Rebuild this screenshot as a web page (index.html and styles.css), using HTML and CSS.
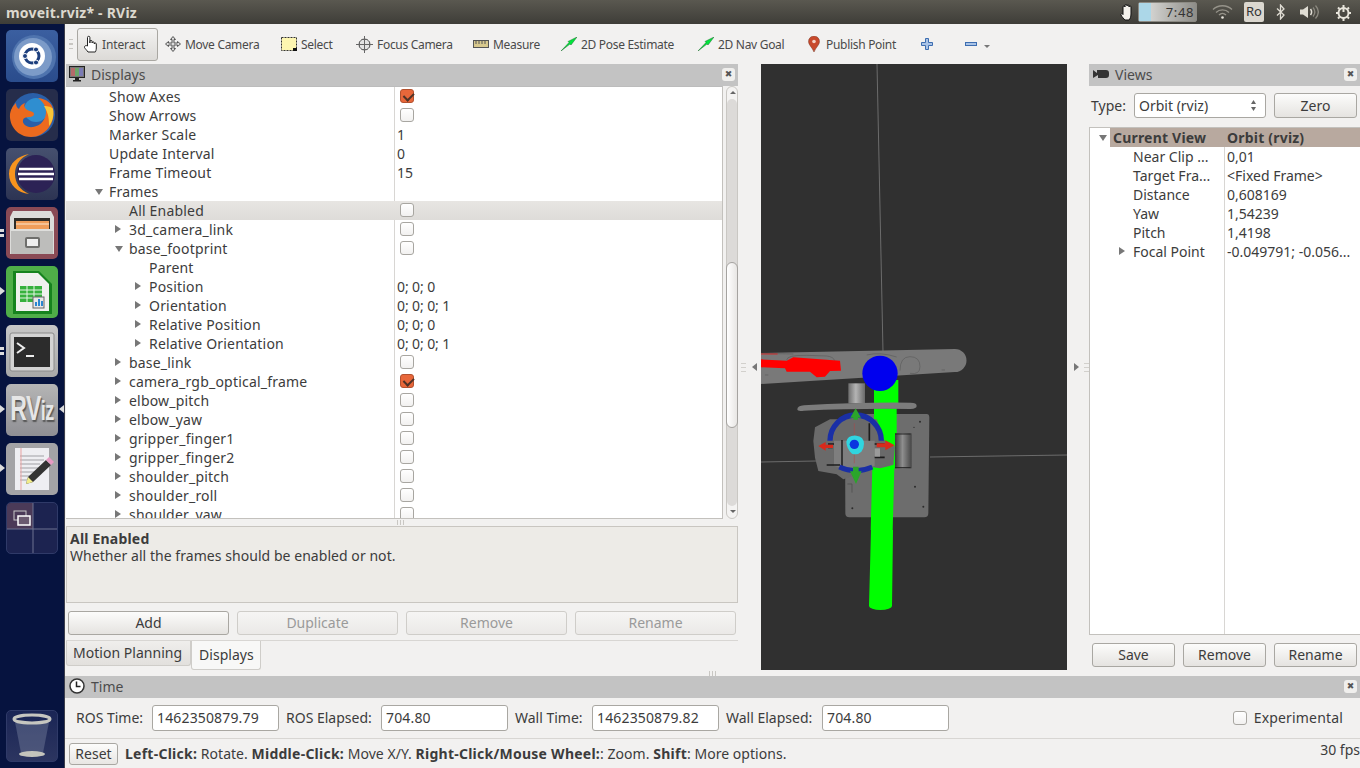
FILE: index.html
```html
<!DOCTYPE html>
<html lang="en">
<head>
<meta charset="utf-8">
<title>moveit.rviz* - RViz</title>
<link rel="stylesheet" href="styles.css">
</head>
<body>
<header class="topbar">
  <div class="win-title">moveit.rviz* - RViz</div>
  <div class="indicators">
    <svg class="ind-hand" width="14" height="18" viewBox="0 0 14 18"><path d="M3 10V4a1 1 0 0 1 2 0V2.500a1 1 0 0 1 2 0V3a1 1 0 0 1 2 0v1a1 1 0 0 1 2 0v7c0 3-1 5-2 6H5c-1-1-3-3-4-5-.5-1 1-2 2-.5z" fill="#f4f2ec" stroke="#111" stroke-width="1"/></svg>
    <div class="clock-box"><span class="clock-fill"></span><span class="clock-text">7:48</span></div>
    <svg class="ind-wifi" width="21" height="16" viewBox="0 0 21 16" fill="none" stroke="#96938a" stroke-width="1.300"><path d="M1 5.500c5-5 14-5 19 0M4 8.500c3.500-3.500 9.500-3.500 13 0M7 11c2-2 5-2 7 0"/><circle cx="10.500" cy="13.500" r="1.300" fill="#e8e5dc" stroke="none"/></svg>
    <div class="ind-lang">Ro</div>
    <svg class="ind-bt" width="9" height="16" viewBox="0 0 9 16" fill="none" stroke="#e0ddd4" stroke-width="1.300"><path d="M1 4.500l7 6.500-3.500 4V1L8 5 1 11.500"/></svg>
    <svg class="ind-vol" width="20" height="16" viewBox="0 0 20 16"><path d="M1 5.500h3L9 2v12l-5-3.500H1z" fill="#e0ddd4"/><path d="M11.500 5c1.500 2 1.500 4 0 6" fill="none" stroke="#e0ddd4" stroke-width="1.500"/><path d="M14 3.500c2.500 3 2.500 6 0 9M16.500 1.500c3.500 4 3.500 9 0 13" fill="none" stroke="#8b887f" stroke-width="1.300"/></svg>
    <svg class="ind-pow" width="17" height="17" viewBox="0 0 17 17" fill="none" stroke="#e8e5dc" stroke-width="2"><circle cx="8.500" cy="9" r="5"/><path d="M8.500 1v7M8.500 14v3M1 9h2.500M13.500 9H16M3 3.500l1.500 1.500M14 3.500 12.500 5M3 14.500 4.500 13M14 14.500 12.500 13"/></svg>
  </div>
</header>
<div class="desktop">
  <nav class="launcher">
    <div class="tile tile-ubuntu"><svg width="52" height="52" viewBox="0 0 52 52"><circle cx="28" cy="27" r="22" fill="#4f74ae"/><circle cx="27" cy="27" r="19" fill="#7c9bc8"/><circle cx="26" cy="26" r="13" fill="#fff"/><circle cx="26" cy="26" r="7" fill="none" stroke="#1d3f7d" stroke-width="3"/><circle cx="19" cy="26" r="2.500" fill="#1d3f7d" stroke="#fff"/><circle cx="30" cy="19.500" r="2.500" fill="#1d3f7d" stroke="#fff"/><circle cx="30" cy="32.500" r="2.500" fill="#1d3f7d" stroke="#fff"/></svg></div>
    <div class="tile tile-firefox"><svg width="52" height="52" viewBox="0 0 52 52"><circle cx="27" cy="26" r="22" fill="#2a5fa8"/><circle cx="30" cy="21" r="12" fill="#2f8ed0"/><path d="M47 20c3 15-9 28-22 28C12 48 3 37 4 25c1-6 4-9 6-11 0 3 1 5 3 6 1-3 3-5 6-6-2 4 1 7 5 8 4 1 5 3 3 5-3 2-9 0-10 4-1 4 4 8 10 7 8-1 13-8 13-15 0-7-4-11-8-14 9 1 14 6 15 11z" fill="#ec6a1e"/><path d="M47 20c1 6 0 12-4 17 0-6 0-12-5-20 4 0 8 1 9 3z" fill="#f7c437"/></svg></div>
    <div class="tile tile-eclipse"><svg width="52" height="52" viewBox="0 0 52 52"><circle cx="30" cy="26" r="19" fill="#2c2255"/><path d="M23 6C12 8 3 15 3 26s9 19 20 20C14 42 9 35 9 26s5-16 14-20z" fill="#f7941e"/><path d="M13 21h34M12 26h36M13 31h34" stroke="#fff" stroke-width="2.400"/></svg></div>
    <div class="tile tile-files"><svg width="52" height="52" viewBox="0 0 52 52"><path d="M7 4h38l3 6v37H4V10z" fill="#dcdcda"/><rect x="8" y="11" width="36" height="11" fill="#2e2c28"/><rect x="10" y="14" width="33" height="8" fill="#ef9d5a"/><path d="M10 17h33" stroke="#fbe6d0"/><path d="M5 22h42v25H5z" fill="#bdbdbb"/><path d="M5 22h42v2H5z" fill="#dededc"/><rect x="20" y="31" width="13" height="9" rx="1" fill="#eee" stroke="#6e6e6c" stroke-width="2"/></svg></div>
    <div class="tile tile-calc"><svg width="52" height="52" viewBox="0 0 52 52"><path d="M7 5h26l13 13v30H7z" fill="#16831e"/><path d="M10 7h22l11 11v27H10z" fill="#f0f1ee"/><path d="M14 20h22v16H14z" fill="#36b13d"/><path d="M14 24h22M14 28h22M14 32h22M21 20v16M28 20v16" stroke="#e6f5e6"/><rect x="27" y="31" width="11" height="11" fill="#e8e8e8" stroke="#666"/><path d="M30 40v-4M33 40v-7M36 40v-5" stroke="#2a86d0" stroke-width="2"/></svg></div>
    <div class="tile tile-term"><svg width="52" height="52" viewBox="0 0 52 52"><rect x="4" y="8" width="44" height="38" rx="2" fill="#d3d3d3" stroke="#8b8b8b"/><rect x="8" y="12" width="36" height="30" fill="#2c2c2c"/><path d="M11 18l7 5-7 5" fill="none" stroke="#eee" stroke-width="2"/><path d="M20 31h8" stroke="#eee" stroke-width="2"/></svg></div>
    <div class="tile tile-rviz"><span class="rviz-word">RV<small>iz</small></span></div>
    <div class="tile tile-edit"><svg width="52" height="52" viewBox="0 0 52 52"><rect x="9" y="5" width="34" height="42" fill="#eeeef2"/><path d="M14 13h24M14 17h24M14 21h20M14 25h18M14 29h16M14 33h14M14 37h10" stroke="#a0a0a5"/><path d="M15 5v42" stroke="#e7a3a3"/><path d="M40 17l5 5-18 17-7 2 2-7z" fill="#333"/><path d="M40 17l3-3 5 5-3 3z" fill="#e79ac3"/><path d="M22 34l5 5-7 2z" fill="#f2ec8a"/></svg></div>
    <div class="tile tile-work"><svg width="50" height="50" viewBox="0 0 50 50"><rect x="0" y="0" width="26" height="26" fill="#4b3a58"/><path d="M26 0v52M0 26h52" stroke="#6d7390"/><rect x="7" y="8" width="12" height="9" fill="none" stroke="#c8c8c8"/><rect x="11" y="13" width="12" height="9" fill="#6a5a70" stroke="#fff" stroke-width="1.500"/></svg></div>
    <div class="tile tile-trash"><svg width="50" height="50" viewBox="0 0 50 50"><path d="M8 11l6 31c1 4 21 4 22 0l6-31z" fill="#7f8aa6" fill-opacity=".4"/><ellipse cx="25" cy="43" rx="13" ry="3" fill="#c4c4bc"/><ellipse cx="25" cy="8" rx="18" ry="4" fill="none" stroke="#c6c6c0" stroke-width="3"/></svg></div>
    <span class="pip pip-calc"></span><span class="pip pip-rviz"></span><span class="pip pip-rviz-r"></span><span class="pip pip-edit"></span>
    <span class="dash dash-a"></span><span class="dash dash-b"></span><span class="dash dash-c"></span><span class="dash dash-d"></span>
  </nav>

  <main class="app">
    <div class="toolbar">
      <span class="grip"></span>
      <button class="tool tool-active"><svg width="16" height="18" viewBox="0 0 16 18" fill="#fff" stroke="#222"><path d="M4.500 11V2.500a1.200 1.200 0 0 1 2.400 0V8V6.500a1.100 1.100 0 0 1 2.200 0V8a1.100 1.100 0 0 1 2.200 0v1a1 1 0 0 1 2 0v4c0 2-.5 3-1 4H5C4 15.500 2 13.500 1.500 12.500 1 11 3 10 4.500 11z"/></svg>Interact</button>
      <button class="tool tool-move"><svg width="16" height="16" viewBox="0 0 16 16" fill="#ddd" stroke="#555"><path d="M8 .5l2.500 3h-1.500V7H12.500V5.500l3 2.500-3 2.500V9H9v3.500h1.500L8 15.500l-2.500-3H7V9H3.500v1.500L.5 8l3-2.500V7H7V3.500H5.500z"/></svg>Move Camera</button>
      <button class="tool tool-select"><svg width="16" height="14" viewBox="0 0 16 14"><rect x=".5" y=".5" width="15" height="13" fill="#fdf6b0" stroke="#333" stroke-dasharray="2 1"/><rect x="12" y="11" width="4" height="3" fill="#111"/></svg>Select</button>
      <button class="tool tool-focus"><svg width="17" height="17" viewBox="0 0 17 17" fill="none" stroke="#666"><circle cx="8.500" cy="8.500" r="5.500" fill="#e4e4e4"/><path d="M8.500 0v17M0 8.500h17M5.500 3.500h6M5.500 13.500h6M3.500 5.500v6M13.500 5.500v6"/></svg>Focus Camera</button>
      <button class="tool tool-measure"><svg width="16" height="8" viewBox="0 0 16 8"><rect x=".5" y=".5" width="15" height="7" fill="#d8c98e" stroke="#555"/><path d="M3 1v3M6 1v3M9 1v3M12 1v3" stroke="#555"/></svg>Measure</button>
      <button class="tool tool-pose"><svg width="16" height="14" viewBox="0 0 16 14"><path d="M0 14l9-7 1 1 6-8-9 4.500 1 1z" fill="#00e63c" stroke="#1c6b2c" stroke-width=".5"/></svg>2D Pose Estimate</button>
      <button class="tool tool-nav"><svg width="16" height="14" viewBox="0 0 16 14"><path d="M0 14l9-7 1 1 6-8-9 4.500 1 1z" fill="#00e63c" stroke="#1c6b2c" stroke-width=".5"/></svg>2D Nav Goal</button>
      <button class="tool tool-point"><svg width="12" height="16" viewBox="0 0 12 16"><path d="M6 16C4 11 .5 9 .5 5.500a5.500 5.500 0 0 1 11 0C11.500 9 8 11 6 16z" fill="#c8492b" stroke="#7a3a28" stroke-width=".5"/><circle cx="6" cy="5.500" r="1.800" fill="#f3d2c4"/></svg>Publish Point</button>
      <button class="tool tool-plus"><svg width="12" height="12" viewBox="0 0 12 12"><path d="M4.500 .5h3v4h4v3h-4v4h-3v-4h-4v-3h4z" fill="#a9c3e6" stroke="#3d6db0"/></svg></button>
      <button class="tool tool-minus"><svg width="12" height="4" viewBox="0 0 12 4"><rect x=".5" y=".5" width="11" height="3" fill="#a9c3e6" stroke="#3d6db0"/></svg><span class="tool-drop"></span></button>
    </div>

    <div class="workspace">
      <section class="dock dock-left">
        <div class="dock-title"><svg width="16" height="16" viewBox="0 0 16 16"><rect x=".5" y=".5" width="15" height="11" fill="#777" stroke="#222"/><rect x="2" y="2" width="4" height="8" fill="#b46a6a"/><rect x="6" y="2" width="4" height="8" fill="#6aa56a"/><rect x="10" y="2" width="4" height="8" fill="#7a7ab4"/><path d="M6 12h4v2h2v1.500H4V14h2z" fill="#222"/></svg><span>Displays</span><button class="close-btn">✖</button></div>
        <div class="tree-wrap">
          <div class="tree">
            <div class="row d2"><span class="name">Show Axes</span><span class="val"><i class="check on"></i></span></div>
            <div class="row d2"><span class="name">Show Arrows</span><span class="val"><i class="check"></i></span></div>
            <div class="row d2"><span class="name">Marker Scale</span><span class="val">1</span></div>
            <div class="row d2"><span class="name">Update Interval</span><span class="val">0</span></div>
            <div class="row d2"><span class="name">Frame Timeout</span><span class="val">15</span></div>
            <div class="row d2 open"><span class="name">Frames</span><span class="val"></span></div>
            <div class="row d3 selected"><span class="name">All Enabled</span><span class="val"><i class="check"></i></span></div>
            <div class="row d3 closed"><span class="name">3d_camera_link</span><span class="val"><i class="check"></i></span></div>
            <div class="row d3 open"><span class="name">base_footprint</span><span class="val"><i class="check"></i></span></div>
            <div class="row d4"><span class="name">Parent</span><span class="val"></span></div>
            <div class="row d4 closed"><span class="name">Position</span><span class="val">0; 0; 0</span></div>
            <div class="row d4 closed"><span class="name">Orientation</span><span class="val">0; 0; 0; 1</span></div>
            <div class="row d4 closed"><span class="name">Relative Position</span><span class="val">0; 0; 0</span></div>
            <div class="row d4 closed"><span class="name">Relative Orientation</span><span class="val">0; 0; 0; 1</span></div>
            <div class="row d3 closed"><span class="name">base_link</span><span class="val"><i class="check"></i></span></div>
            <div class="row d3 closed"><span class="name">camera_rgb_optical_frame</span><span class="val"><i class="check on"></i></span></div>
            <div class="row d3 closed"><span class="name">elbow_pitch</span><span class="val"><i class="check"></i></span></div>
            <div class="row d3 closed"><span class="name">elbow_yaw</span><span class="val"><i class="check"></i></span></div>
            <div class="row d3 closed"><span class="name">gripper_finger1</span><span class="val"><i class="check"></i></span></div>
            <div class="row d3 closed"><span class="name">gripper_finger2</span><span class="val"><i class="check"></i></span></div>
            <div class="row d3 closed"><span class="name">shoulder_pitch</span><span class="val"><i class="check"></i></span></div>
            <div class="row d3 closed"><span class="name">shoulder_roll</span><span class="val"><i class="check"></i></span></div>
            <div class="row d3 closed"><span class="name">shoulder_yaw</span><span class="val"><i class="check"></i></span></div>
          </div>
          <div class="scrollbar">
            <span class="sb-btn sb-up"></span>
            <div class="sb-trough"><span class="sb-thumb"></span></div>
            <span class="sb-btn sb-down"></span>
          </div>
        </div>
        <div class="hgrip"><span></span></div>
        <div class="desc"><strong>All Enabled</strong><br>Whether all the frames should be enabled or not.</div>
        <div class="btn-row">
          <button class="btn">Add</button>
          <button class="btn" disabled>Duplicate</button>
          <button class="btn" disabled>Remove</button>
          <button class="btn" disabled>Rename</button>
        </div>
        <div class="tabs">
          <div class="tab">Motion Planning</div>
          <div class="tab tab-on">Displays</div>
        </div>
        <div class="hgrip hgrip-right"><span></span></div>
      </section>

      <div class="splitter splitter-l"><span class="vgrip"></span><span class="arrow-left"></span></div>

      <div class="view3d">
        <svg width="306" height="606" viewBox="761 64 306 606">
          <defs>
            <linearGradient id="motor" x1="0" x2="1" y1="0" y2="0"><stop offset="0" stop-color="#3a3a3a"/><stop offset=".45" stop-color="#8e8e8e"/><stop offset="1" stop-color="#454545"/></linearGradient>
            <linearGradient id="bracket" x1="0" x2="1" y1="0" y2="0"><stop offset="0" stop-color="#6e6e6e"/><stop offset=".45" stop-color="#b4b4b4"/><stop offset="1" stop-color="#6a6a6a"/></linearGradient>
          </defs>
          <rect x="761" y="64" width="306" height="606" fill="#303030"/>
          <path d="M877 64 884 400M761 462 816 461M930 457 1067 455" stroke="#6c6c6c" stroke-width="1" fill="none"/>
          <path d="M761 353 955 349a11.500 11.500 0 0 1 0 23L761 384z" fill="#797979"/>
          <g transform="translate(760 340) scale(.33333)">
            <path d="M3 40 100 42M80 60q0-15 60-14l60 2q20 2 24 14M320 45q40-10 90 6M420 92q0-42 30-42t30 30q0 25-30 20M15 105h10M545 90h10" stroke="#5c5c5c" stroke-width="2" fill="none"/>
            <path d="M3 58 80 62 100 52 240 62 243 92 210 93 195 110 170 112 150 95 80 95 75 85 3 82z" fill="#f00"/>
            <path d="M3 41h50v2H3z" fill="#f00"/>
            <path d="M342 120h73v70h-73z" fill="#0f0"/>
            <circle cx="360" cy="100" r="53" fill="#00e"/>
            <path d="M265 130h50v60h-50z" fill="url(#bracket)"/>
            <path d="M255 232q0-10 10-10h235q8 0 8 10l-3 288q0 12-12 12H268q-12 0-12-12z" fill="#6d6d6d"/>
            <g fill="#2c2c2c"><circle cx="480" cy="245" r="3"/><circle cx="490" cy="500" r="3"/><circle cx="277" cy="505" r="3"/><circle cx="465" cy="440" r="3"/><circle cx="462" cy="262" r="2"/></g>
            <path d="M342 205h68v95h-68zM337 380h66l-5 190h-66z" fill="#0f0"/>
            <path d="M340 300h70v85h-70z" fill="#0f0"/>
            <path d="M112 208q0-10 20-12 170-10 320-8 18 0 18 10 0 8-18 9-170-2-320 5-20 3-20-4z" fill="#7c7c7c"/>
            <path d="M165 262l45-24h140l22 62 33 20-5 55-40 10-30-5-50 28-30 10-20-15-55-10-10-40-5-50z" fill="#6a6a6a"/>
            <path d="M405 280h50v105h-50z" fill="url(#motor)"/>
            <path d="M405 282h47M405 383h47" stroke="#222" stroke-width="3"/>
            <path d="M222 302h122v76q-60 14-122 0z" fill="#7e7e7e"/>
            <path d="M204 312h18M204 322h14M200 375h40M344 312h30M344 352h30M328 250v52" stroke="#1c1c1c" stroke-width="5" fill="none"/>
            <path d="M262 432h14v26" stroke="#4a4a4a" stroke-width="2" fill="none"/>
            <path d="M246 300v80" stroke="#111" stroke-width="4"/>
            <path d="M344 325h16v25h-16z" fill="#9a9a9a"/>
            <path d="M210 302a77 77 0 0 1 154 0" fill="none" stroke="#1a2fa6" stroke-width="16"/>
            <path d="M238 381q49 22 99 0" fill="none" stroke="#1a2fa6" stroke-width="15"/>
            <path d="M283 250v120" stroke="#b54545" stroke-width="1.500"/>
            <path d="M287 205l16 28h-9v6h-14v-6h-9z" fill="#2ba52b"/>
            <path d="M279 380h17v14h9l-17 38-18-38h9z" fill="#2ba52b"/>
            <path d="M175 318l22-12v8h22v10h-22v8z" fill="#d82a1c"/>
            <path d="M404 316l-28-15v9h-26v12h26v9z" fill="#d82a1c"/>
            <path d="M259 305q4-20 30-18 22 2 23 24 0 14-8 24-12 12-28 6-16-14-17-36z" fill="#30d5e0"/>
            <circle cx="283" cy="313" r="14" fill="#0a34e0"/>
            <path d="M395 375h8v7h-8z" fill="#0f0"/>
          </g>
          <path d="M871 530h22l-1 76a11.500 4 0 0 1-23 0z" fill="#0f0"/>
        </svg>
      </div>

      <div class="splitter splitter-r"><span class="arrow-right"></span><span class="vgrip"></span></div>

      <section class="dock dock-right">
        <div class="dock-title"><svg width="16" height="10" viewBox="0 0 16 10"><path d="M0 1l4 3V1h0l1 0h8a3 3 0 0 1 3 3v2a3 3 0 0 1-3 3H5V6L0 9z" fill="#333"/></svg><span>Views</span><button class="close-btn">✖</button></div>
        <div class="type-row">
          <label class="type-label">Type:</label>
          <div class="combo"><span>Orbit (rviz)</span><svg width="7" height="13" viewBox="0 0 7 13" fill="#666"><path d="M3.500 1 6 5H1zM3.500 12 1 8h5z"/></svg></div>
          <button class="btn btn-zero">Zero</button>
        </div>
        <div class="vtree">
          <div class="vrow vhead"><span class="vname">Current View</span><span class="vval">Orbit (rviz)</span></div>
          <div class="vrow"><span class="vname">Near Clip ...</span><span class="vval">0,01</span></div>
          <div class="vrow"><span class="vname">Target Fra...</span><span class="vval">&lt;Fixed Frame&gt;</span></div>
          <div class="vrow"><span class="vname">Distance</span><span class="vval">0,608169</span></div>
          <div class="vrow"><span class="vname">Yaw</span><span class="vval">1,54239</span></div>
          <div class="vrow"><span class="vname">Pitch</span><span class="vval">1,4198</span></div>
          <div class="vrow vfocal"><span class="vname">Focal Point</span><span class="vval">-0.049791; -0.056...</span></div>
        </div>
        <div class="vbtns">
          <button class="btn">Save</button>
          <button class="btn">Remove</button>
          <button class="btn">Rename</button>
        </div>
      </section>
    </div>

    <section class="time-panel">
      <div class="dock-title"><svg width="16" height="16" viewBox="0 0 16 16"><circle cx="8" cy="8" r="7" fill="#fff" stroke="#333" stroke-width="1.500"/><path d="M7.500 3.500v5h4" fill="none" stroke="#222" stroke-width="1.500"/></svg><span>Time</span><button class="close-btn">✖</button></div>
      <div class="time-row">
        <label class="t-label t-rt">ROS Time:</label><input class="t-input" value="1462350879.79">
        <label class="t-label t-re">ROS Elapsed:</label><input class="t-input" value="704.80">
        <label class="t-label t-wt">Wall Time:</label><input class="t-input" value="1462350879.82">
        <label class="t-label t-we">Wall Elapsed:</label><input class="t-input" value="704.80">
        <span class="t-exp"><i class="check"></i>Experimental</span>
      </div>
    </section>
    <footer class="status">
      <button class="reset">Reset</button>
      <span class="hint"><b>Left-Click:</b> Rotate. <b>Middle-Click:</b> Move X/Y. <b>Right-Click/Mouse Wheel:</b>: Zoom. <b>Shift</b>: More options.</span>
      <span class="fps">30 fps</span>
    </footer>
  </main>
</div>
</body>
</html>
```
FILE: styles.css
```css
* { box-sizing: border-box; }
html, body { margin: 0; height: 100%; overflow: hidden; }
body {
  width: 1360px; height: 768px; display: flex; flex-direction: column;
  font: 14px/19px "Noto Sans", "DejaVu Sans", sans-serif; color: #3c3c3c; background: #f2f1f0;
}
button, input { font: inherit; color: inherit; letter-spacing: inherit; }

/* top bar */
.topbar {
  height: 24px; flex: none; display: flex; align-items: center; justify-content: space-between;
  background: linear-gradient(#5a5850, #3e3d38);
}
.win-title { padding-left: 6px; color: #dcd8ce; font-weight: 700; font-size: 14px; letter-spacing: .22px; }
.indicators { display: flex; align-items: center; height: 24px; padding-right: 8px; }
.ind-hand { margin-right: 4px; }
.clock-box {
  width: 59px; height: 20px; border: 1px solid #8d8b84; border-radius: 2px; position: relative;
  background: linear-gradient(90deg, #e4e4e2, #8e8d88); display: flex; justify-content: flex-end; align-items: center;
  padding-right: 2px; font-size: 13px; color: #333; letter-spacing: .6px;
}
.clock-fill { position: absolute; left: 0; top: 0; bottom: 0; width: 12px; background: #acd7e8; }
.clock-text { position: relative; }
.ind-wifi { margin-left: 15px; }
.ind-lang {
  width: 20px; height: 20px; margin-left: 11px; background: #dbd7cf; border-radius: 2px;
  text-align: center; font-size: 13px; color: #333;
}
.ind-bt { margin-left: 12px; }
.ind-vol { margin-left: 14px; }
.ind-pow { margin-left: 16px; }

.desktop { flex: 1; display: flex; min-height: 0; }

/* launcher */
.launcher {
  width: 65px; flex: none; position: relative; display: flex; flex-direction: column; align-items: flex-start;
  gap: 7px; padding: 6px 0 6px 6px; background: #06133f; border-right: 1px solid #3d3f4c;
}
.tile { width: 52px; height: 52px; border-radius: 5px; overflow: hidden; flex: none; }
.tile svg { display: block; }
.tile-ubuntu { background: linear-gradient(#3b5fa0, #2a4c8c); }
.tile-firefox { background: #262d4b; }
.tile-eclipse { background: linear-gradient(#46506f, #2d3453); }
.tile-files { background: #8a4a55; }
.tile-calc { background: #4fae48; }
.tile-term { background: linear-gradient(#c7c7c7, #a8a8a8); }
.tile-rviz { background: linear-gradient(#b5b5b5, #8f8f94); display: flex; align-items: center; justify-content: center; }
.rviz-word {
  display: inline-block; transform: scaleY(1.5); font: 700 23px/23px "Liberation Sans", sans-serif; color: #e6e6e6; letter-spacing: -.5px; text-shadow: 1px 1px 1px #555;
}
.rviz-word small { font-size: 18px; }
.tile-edit { background: #a3a3a6; }
.tile-work { background: #1c2350; border: 1px solid #2f3a68; }
.tile-trash { background: linear-gradient(#1a2555, #2c3560); margin-top: auto; border: 1px solid #2f3a68; }
.pip { position: absolute; left: 0; width: 0; height: 0; border-style: solid; border-width: 4px 0 4px 5px; border-color: transparent transparent transparent #dcdcdc; }
.pip-calc { top: 263px; }
.pip-rviz { top: 381px; }
.pip-edit { top: 440px; }
.pip-rviz-r { top: 381px; left: 59px; border-width: 4px 5px 4px 0; border-color: transparent #dcdcdc transparent transparent; }
.dash { position: absolute; left: 0; width: 4px; height: 3px; background: #dcdcdc; }
.dash-a { top: 205px; }
.dash-b { top: 210px; }
.dash-c { top: 323px; }
.dash-d { top: 328px; }

/* app */
.app { flex: 1; min-width: 0; display: flex; flex-direction: column; background: #f2f1f0; }
.toolbar { height: 40px; flex: none; display: flex; align-items: center; padding-left: 4px; color: #4a4a4a; font-size: 12px; letter-spacing: -.3px; }
.grip { width: 4px; height: 10px; margin-right: 4px; border-top: 1px solid #c8c6c2; border-bottom: 1px solid #c8c6c2; background: linear-gradient(#f2f1f0 40%, #c8c6c2 40%, #c8c6c2 60%, #f2f1f0 60%); }
.tool {
  height: 32px; border: 0; background: none; padding: 0; display: flex; align-items: center; gap: 4px; flex: none; text-align: left;
}
.tool-active {
  width: 81px; height: 33px; padding-left: 5px; margin-right: 7px; gap: 3px; border: 1px solid #a9a7a2; border-radius: 3px;
  background: linear-gradient(#f3f2f1, #dcdad7); letter-spacing: -.12px;
}
.tool-move { width: 116px; }
.tool-select { width: 75px; }
.tool-focus { width: 117px; }
.tool-measure { width: 88px; }
.tool-pose { width: 137px; }
.tool-nav { width: 110px; }
.tool-point { width: 113px; gap: 6px; }
.tool-plus { width: 44px; }
.tool-minus { width: 30px; }
.tool-drop { width: 0; height: 0; margin-left: 3px; margin-top: 4px; border: 3.500px solid transparent; border-top-color: #777; border-bottom: 0; }

.workspace { flex: 1; min-height: 0; display: flex; padding-top: 0; }
.dock { display: flex; flex-direction: column; min-height: 0; }
.dock-left { width: 673px; flex: none; padding-left: 1px; }
.dock-right { width: 271px; flex: none; }
.dock-title {
  height: 22px; flex: none; display: flex; align-items: center; gap: 6px; padding: 0 3px 2px 4px;
  background: #c3c3c3; color: #4c4c4c;
}
.dock-left .dock-title { padding-left: 3px; }
.dock-title span { flex: 1; }
.close-btn {
  width: 13px; height: 13px; padding: 0; border: 0; border-radius: 3px; background: #f0efed; color: #555;
  font: 9px/13px "DejaVu Sans", sans-serif; text-align: center;
}
.tree-wrap { height: 433px; flex: none; display: flex; }
.tree {
  width: 657px; flex: none; overflow: hidden; background: #fff; border: 1px solid #c3c1bd; border-top-color: #bcbcbc; border-left: 0;
  position: relative; background-image: linear-gradient(#d8d6d3, #d8d6d3); background-size: 1px 100%; background-repeat: no-repeat; background-position: 328px 0;
}
.row { height: 19px; display: flex; position: relative; color: #3c3c3c; }
.name { width: 329px; flex: none; white-space: nowrap; letter-spacing: .2px; }
.val { padding-left: 2px; flex: 1; white-space: nowrap; letter-spacing: -.1px; }
.d2 .name { padding-left: 43px; }
.d3 .name { padding-left: 63px; }
.d4 .name { padding-left: 83px; }
.selected { background: linear-gradient(#e7e5e2, #dedcd9); }
.open .name::before, .closed .name::before { content: ""; position: absolute; width: 0; height: 0; border-style: solid; }
.open .name::before { top: 7px; border-width: 6px 4px 0 4px; border-color: #777 transparent transparent transparent; }
.closed .name::before { top: 5px; border-width: 4px 0 4px 6px; border-color: transparent transparent transparent #777; }
.d2.open .name::before { left: 29px; }
.d3.open .name::before, .d3.closed .name::before { left: 49px; }
.d4.closed .name::before { left: 69px; }
.check {
  display: inline-block; width: 14px; height: 14px; margin: 2px 0 0 3px; border: 1px solid #a8a6a1; border-radius: 3px; background: linear-gradient(#fff, #f2f1f0); position: relative; vertical-align: top;
}
.check.on { background: #e8673a; border-color: #b2512f; }
.check.on::after { content: ""; position: absolute; left: 2px; top: 0; width: 8px; height: 5px; border-left: 2px solid #4e3328; border-bottom: 2px solid #4e3328; transform: rotate(-45deg) translate(-1px, 2px); }
.scrollbar { width: 13px; margin-left: 3px; display: flex; flex-direction: column; border: 1px solid #c9c7c3; border-radius: 6px; background: #f4f3f2; }
.sb-btn { height: 12px; flex: none; position: relative; }
.sb-up::after, .sb-down::after { content: ""; position: absolute; left: 3px; top: 4px; border: 3px solid transparent; }
.sb-up::after { border-bottom: 3px solid #666; border-top: 0; }
.sb-down::after { border-top: 3px solid #666; border-bottom: 0; }
.sb-trough { flex: 1; padding-top: 163px; background: #dcdad8; border-radius: 6px; }
.sb-thumb { display: block; height: 166px; margin: 0 -1px; border: 1px solid #a5a3a0; border-radius: 6px; background: linear-gradient(90deg, #fff, #e8e6e4); }
.hgrip { height: 7px; flex: none; display: flex; justify-content: center; padding-right: 4px; }
.hgrip span { width: 7px; height: 5px; margin-top: 1px; background: repeating-linear-gradient(90deg, #c9c7c3 0 1px, transparent 1px 3px); }
.desc { height: 77px; flex: none; border: 1px solid #c9c6c1; background: #edebe7; padding: 3px 3px; line-height: 17px; margin-bottom: 8px; letter-spacing: .05px; }
.desc strong { font-weight: 700; letter-spacing: .2px; }
.btn-row { display: grid; grid-template-columns: repeat(4, 161px); gap: 8px; padding-left: 2px; height: 30px; flex: none; border-bottom: 1px solid #d8d6d3; }
.btn {
  height: 24px; padding: 0 0 2px; border: 1px solid #a9a7a2; border-radius: 3px; background: linear-gradient(#fcfcfb, #e5e3e0); color: #3c3c3c; text-align: center;
}
.btn:disabled { color: #9a9a9a; border-color: #cfcdc9; background: linear-gradient(#f6f5f4, #ebe9e7); }
.tabs { display: flex; height: 29px; flex: none; }
.tab { width: 125px; height: 25px; padding-left: 6px; border: 1px solid #cfcdc9; border-top: 0; border-radius: 0 0 3px 3px; background: linear-gradient(#efeeec, #e2e0dd); line-height: 24px; color: #3c3c3c; letter-spacing: .03px; }
.tab-on { width: 70px; height: 29px; padding-left: 7px; background: #f8f8f7; line-height: 28px; border: 1px solid #cfcdc9; border-top: 0; }
.hgrip-right { justify-content: flex-end; padding-right: 22px; height: 6px; }
.splitter { width: 22px; flex: none; display: flex; align-items: center; }
.splitter-l { width: 23px; padding-left: 3px; gap: 6px; }
.splitter-r { padding-left: 7px; gap: 5px; }
.vgrip { width: 5px; height: 9px; background: repeating-linear-gradient(#d2d0cc 0 1px, transparent 1px 4px); }
.arrow-left { width: 0; height: 0; border: 4px solid transparent; border-right: 5px solid #777; border-left: 0; }
.arrow-right { width: 0; height: 0; border: 4px solid transparent; border-left: 5px solid #777; border-right: 0; }
.view3d { width: 306px; height: 606px; flex: none; }
.view3d svg { display: block; }
.type-row { height: 41px; flex: none; display: flex; align-items: center; padding: 0 3px 2px 2px; }
.type-label { width: 43px; flex: none; }
.combo { width: 132px; height: 25px; flex: none; border: 1px solid #a9a7a2; border-radius: 3px; background: #fff; display: flex; align-items: center; justify-content: space-between; padding: 0 8px 0 4px; }
.btn-zero { width: 83px; height: 25px; margin-left: 8px; flex: none; padding: 0; }
.vtree {
  height: 508px; flex: none; background: #fff; border: 1px solid #c3c1bd; border-right: 0;
  background-image: linear-gradient(#d8d6d3, #d8d6d3); background-size: 1px 100%; background-repeat: no-repeat; background-position: 134px 0;
}
.vrow { height: 19px; display: flex; position: relative; white-space: nowrap; }
.vname { width: 135px; padding-left: 43px; flex: none; }
.vval { padding-left: 2px; flex: 1; overflow: hidden; }
.vhead { font-weight: 700; margin-left: 20px; background: #b8a99f; letter-spacing: .2px; }
.vhead .vname { width: 115px; padding-left: 3px; }
.vhead::before { content: ""; position: absolute; left: -11px; top: 7px; border: 4px solid transparent; border-top: 6px solid #777; border-bottom: 0; }
.vfocal::before { content: ""; position: absolute; left: 29px; top: 5px; border: 4px solid transparent; border-left: 6px solid #777; border-right: 0; }
.vbtns { display: flex; gap: 8px; padding: 8px 3px 0; }
.vbtns .btn { width: 83px; }

/* time */
.time-panel { flex: none; margin-top: 6px; }
.time-row { height: 41px; display: flex; align-items: center; border-bottom: 1px solid #d8d6d3; padding-left: 11px; padding-bottom: 1px; }
.t-label { flex: none; }
.t-rt { width: 76px; }
.t-re { width: 95px; margin-left: 7px; }
.t-wt { width: 77px; margin-left: 7px; }
.t-we { width: 96px; margin-left: 7px; }
.t-input { width: 127px; height: 26px; flex: none; border: 1px solid #a9a7a2; border-radius: 3px; background: #fff; padding: 0 4px; letter-spacing: .15px; }
.t-exp { margin-left: auto; padding-right: 17px; display: flex; align-items: center; gap: 7px; letter-spacing: .17px; }
.t-exp .check { margin: 0; }
.status { height: 29px; flex: none; display: flex; align-items: flex-start; padding-left: 4px; }
.reset { width: 49px; height: 22px; margin-top: 4px; padding: 0 0 1px; border: 1px solid #a9a7a2; border-radius: 3px; background: linear-gradient(#fcfcfb, #e8e6e3); }
.hint { margin: 5px 0 0 7px; white-space: nowrap; letter-spacing: .04px; }
.hint b { letter-spacing: .25px; }
.fps { margin: 1px 0 0 auto; }
```
